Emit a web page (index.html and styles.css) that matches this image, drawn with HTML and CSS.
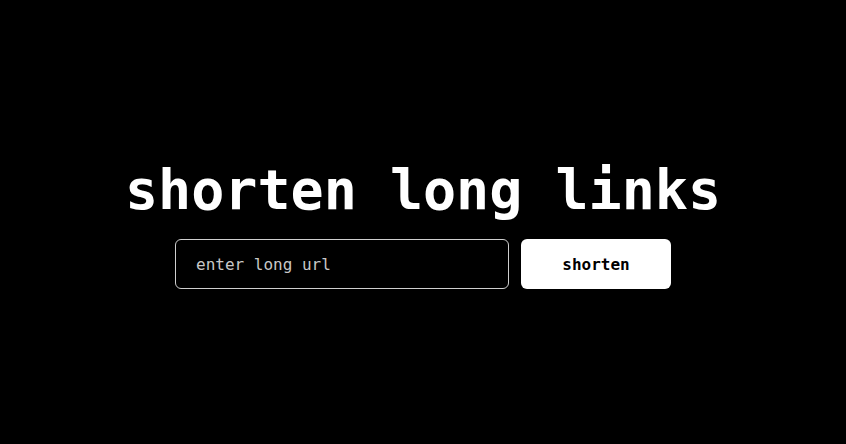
FILE: index.html
```html
<!DOCTYPE html>
<html lang="en">
<head>
<meta charset="utf-8">
<title>shorten long links</title>
<link rel="stylesheet" href="styles.css">
</head>
<body>
<main class="page">
  <h1 class="title">shorten long links</h1>
  <form class="form">
    <input class="url-input" type="text" placeholder="enter long url">
    <button class="submit" type="button">shorten</button>
  </form>
</main>
</body>
</html>
```
FILE: styles.css
```css
* { box-sizing: border-box; }
html, body { margin: 0; padding: 0; background: #000; }
body {
  font-family: "DejaVu Sans Mono", "Liberation Mono", monospace;
  color: #fff;
}
.page {
  height: 444px;
  padding-top: 2px;
  display: flex;
  flex-direction: column;
  align-items: center;
  justify-content: center;
}
.title {
  margin: 0 0 16px;
  font-size: 55px;
  line-height: 66px;
  font-weight: bold;
  letter-spacing: 0;
}
.form {
  display: flex;
  gap: 12px;
}
.url-input {
  width: 334px;
  height: 50px;
  background: #000;
  border: 1px solid #cfcfcf;
  border-radius: 6px;
  padding: 0 20px;
  color: #fff;
  font-family: inherit;
  font-size: 16px;
  outline: none;
}
.url-input::placeholder { color: #c8c8c8; }
.submit {
  width: 150px;
  height: 50px;
  background: #fff;
  color: #000;
  border: none;
  border-radius: 6px;
  font-family: inherit;
  font-size: 16px;
  font-weight: bold;
  cursor: pointer;
}
```
